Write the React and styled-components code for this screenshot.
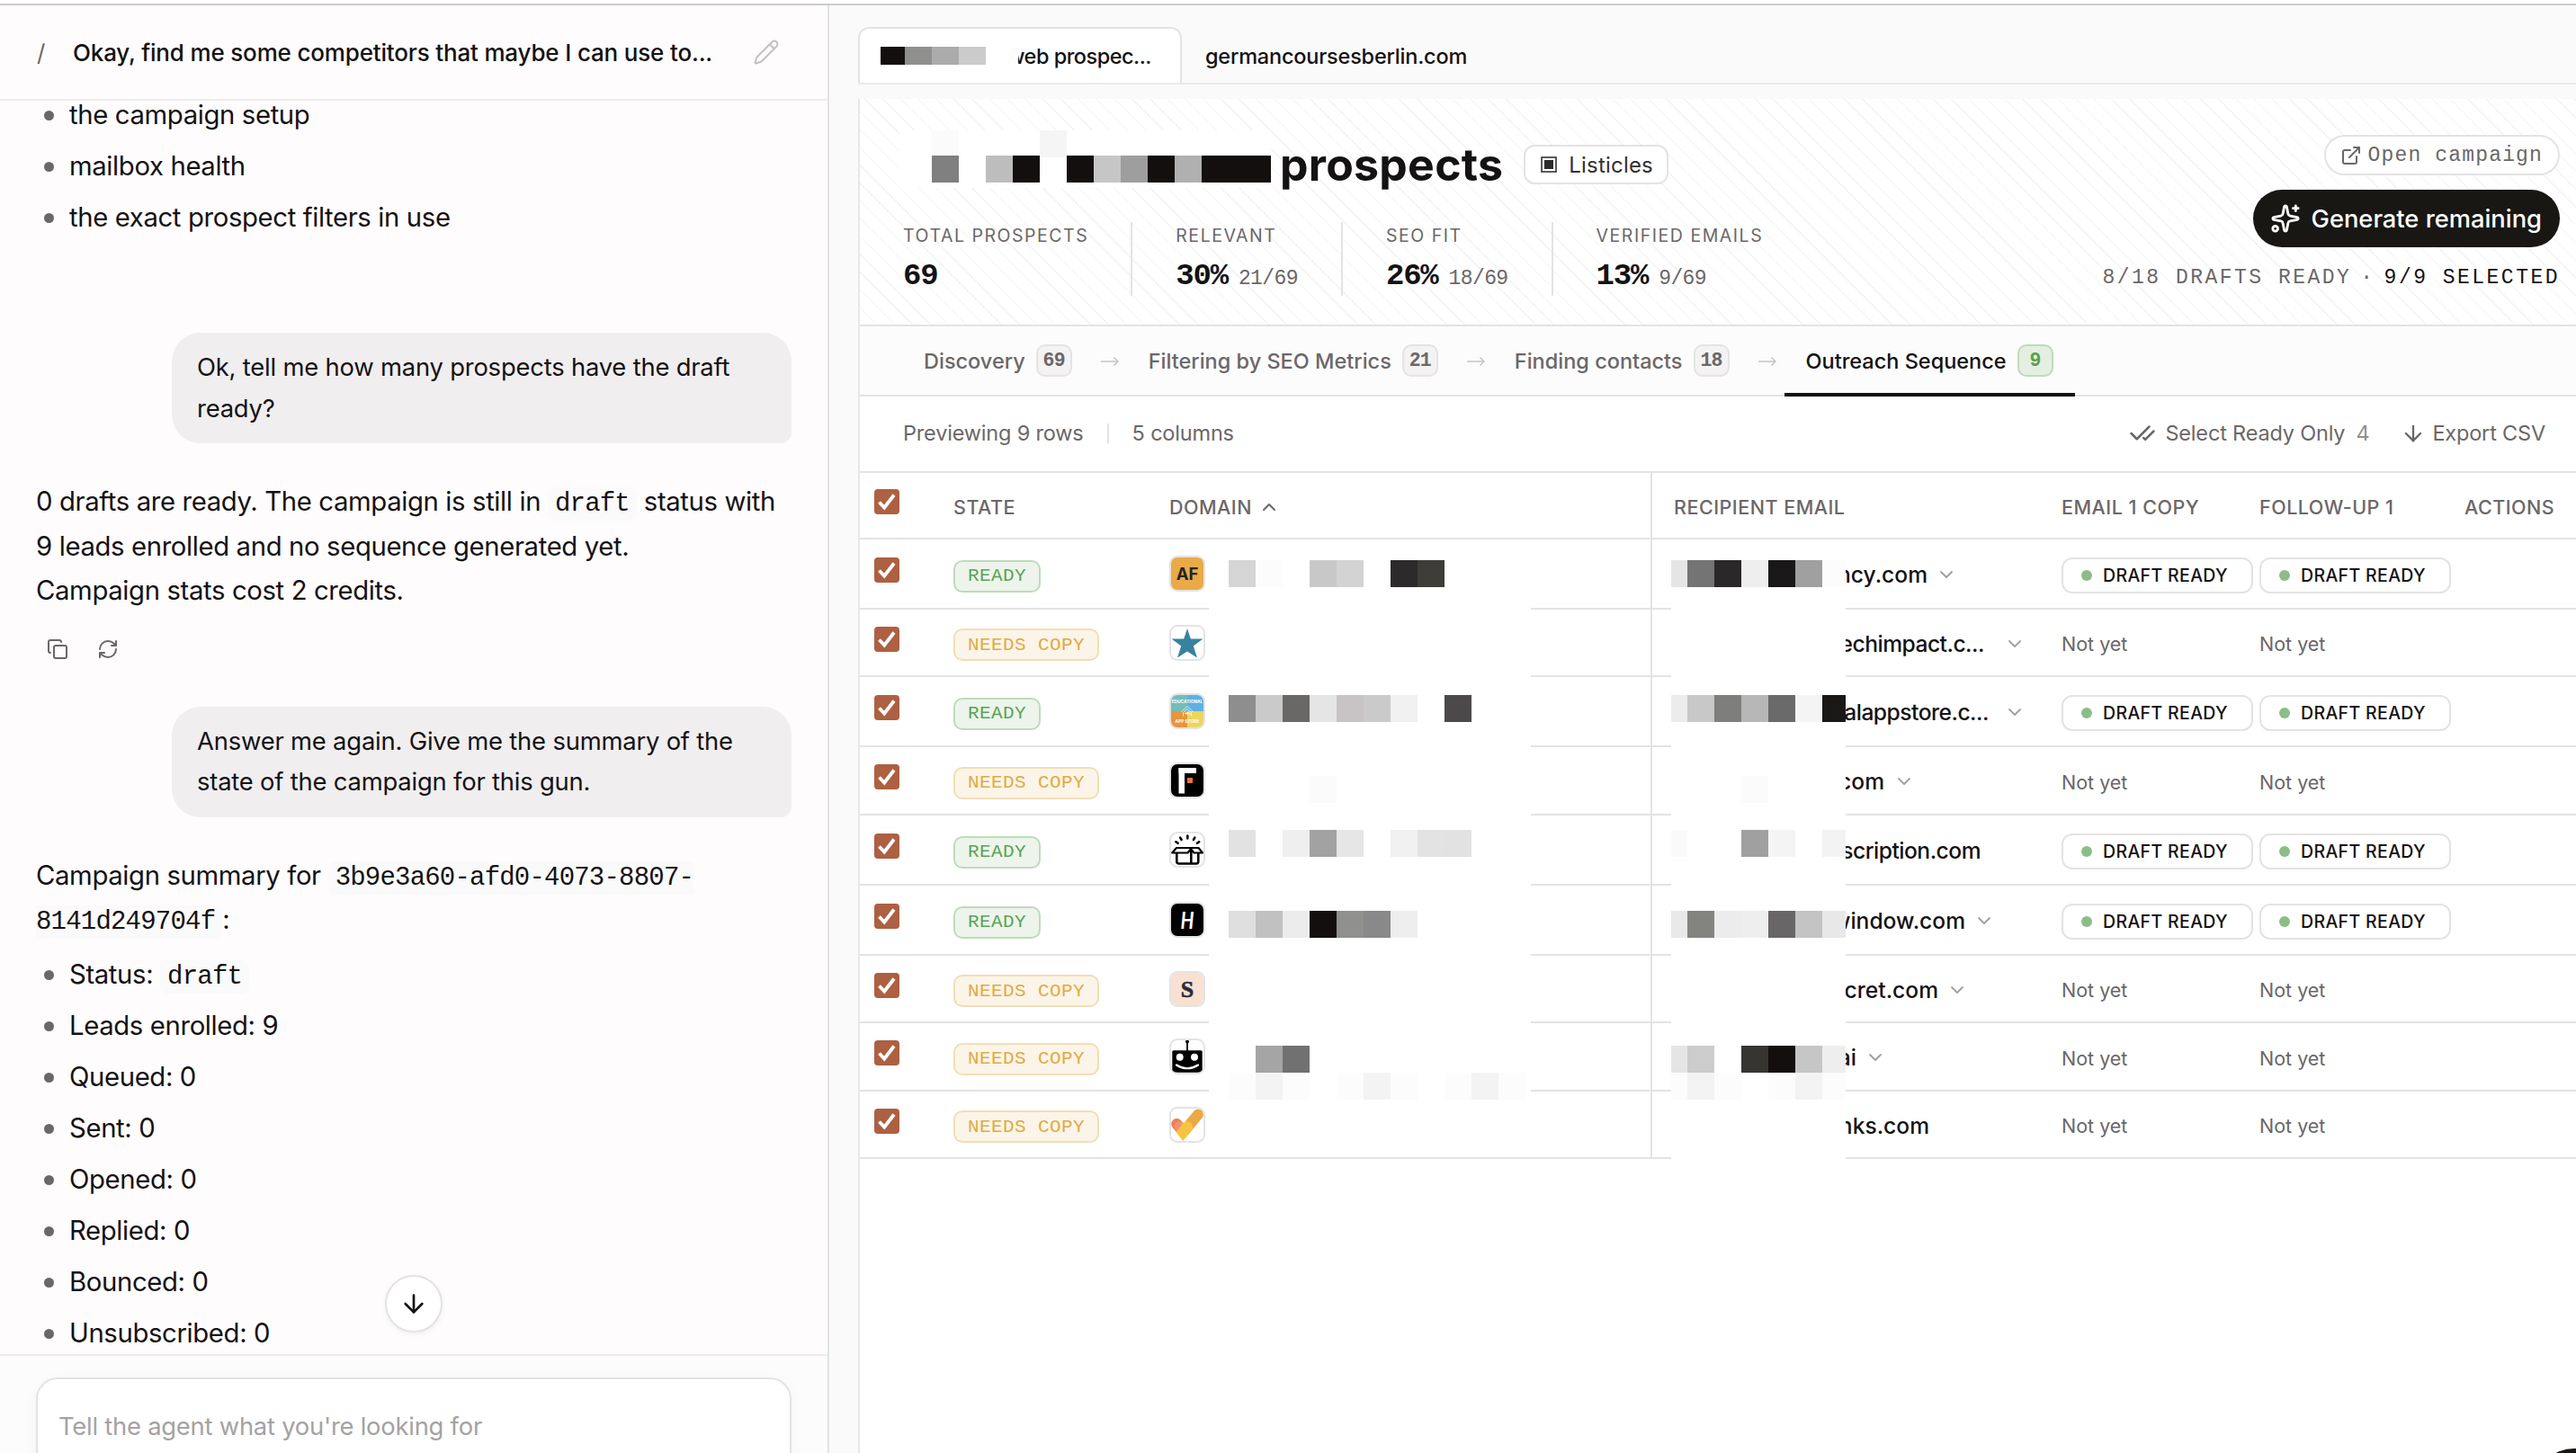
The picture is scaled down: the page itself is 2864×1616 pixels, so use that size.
import React from "react";
import styled, { createGlobalStyle, css } from "styled-components";
import {
  ArrowDown,
  CheckCheck,
  ChevronDown,
  ChevronUp,
  Copy,
  ExternalLink,
  Pencil,
  RefreshCw,
  Sparkles,
} from "lucide-react";

const FONTS = {
  sans: `Inter, "Liberation Sans", sans-serif`,
  mono: `"Liberation Mono", "DejaVu Sans Mono", monospace`,
};

const COLORS = {
  ink: "#141213",
  muted: "#6b6768",
  faint: "#a5a2a3",
  line: "#e4e3e3",
};

const STATS = [
  { label: "Total prospects", value: "69" },
  { label: "Relevant", value: "30%", ratio: "21/69" },
  { label: "SEO fit", value: "26%", ratio: "18/69" },
  { label: "Verified emails", value: "13%", ratio: "9/69" },
];

const STAGES = [
  { name: "Discovery", count: 69 },
  { name: "Filtering by SEO Metrics", count: 21 },
  { name: "Finding contacts", count: 18 },
  { name: "Outreach Sequence", count: 9, active: true },
];

const ROWS = [
  { icon: "af", email: "ncy.com", width: 282, gap: 9, menu: true, ready: true, height: 78 },
  { icon: "star", email: "echimpact.c...", width: 345, gap: 22, tight: true, menu: true, height: 75 },
  { icon: "edu", email: "alappstore.c...", width: 350, gap: 17, tight: true, menu: true, ready: true, height: 78 },
  { icon: "f", email: ".com", width: 234, menu: true, height: 76 },
  { icon: "box", email: "scription.com", width: 341, tight: true, ready: true, height: 78 },
  { icon: "h", email: "window.com", width: 324, gap: 9, menu: true, ready: true, height: 78 },
  { icon: "s", email: "cret.com", width: 294, gap: 9, menu: true, height: 75 },
  { icon: "robot", email: "ai", width: 203, gap: 9, menu: true, height: 76 },
  { icon: "check", email: "nks.com", width: 284, height: 75 },
];

// Each mosaic row is [y, cell colors]; null leaves the cell blank.
const TAB_MOSAIC = [[0, ["#140f0f", "#8f8f8d", "#ababab", "#cbcbcb"]]];

const TITLE_MOSAIC = [
  [0, [null, "#fbfbfb", null, null, null, "#f5f5f5"]],
  [
    28,
    [null, "#808080", null, "#bdbdbd", "#140f0f", null, "#140f0f", "#c6c6c6", "#9e9e9e", "#140f0f", "#b0b0b0", "#140f0f", "#140f0f", "#140f0f"],
  ],
];

const DOMAIN_MOSAIC = [
  [21, ["#d5d5d5", "#fcfcfc", null, "#c8c8c8", "#d3d3d3", null, "#2c2a2b", "#3d3c39"]],
  [171, ["#8e8e8e", "#cacaca", "#696866", "#e5e5e5", "#c8c4c6", "#cacaca", "#f0f0f0", null, "#4b494a"]],
  [261, [null, null, null, "#fbfbfb"]],
  [321, ["#e2e2e2", null, "#efefef", "#a2a2a2", "#e6e6e6", null, "#f0f0f0", "#e3e3e3", "#e2e2e2"]],
  [411, ["#dfdfdf", "#c1c1c1", "#ececec", "#140f0f", "#90908e", "#898989", "#eeeeee"]],
  [561, [null, "#a5a5a5", "#717171"]],
  [591, ["#fcfcfc", "#f3f3f3", "#fcfcfc", null, "#fcfcfc", "#f3f3f3", "#fcfcfc", null, "#fcfcfc", "#f3f3f3", "#fcfcfc"]],
];

const EMAIL_MOSAIC = [
  [21, ["#e5e5e5", "#747474", "#2a2829", "#eeeeee", "#191717", "#a0a0a0", "#fcfcfc"]],
  [171, ["#ececec", "#c8c8c8", "#7e7e7c", "#b7b7b7", "#6a6a6a", "#f4f4f4", "#191816"]],
  [261, [null, null, null, "#fbfbfb"]],
  [321, ["#fafafa", null, null, "#a0a0a0", "#f4f4f4", null, "#f3f3f3"]],
  [411, ["#e9e9e9", "#83847f", "#ececec", "#eeeeee", "#696667", "#c4c4c4", "#e8e8e8"]],
  [561, ["#e5e5e5", "#cccccc", null, "#363532", "#140f0f", "#c6c6c6", "#eeeeee"]],
  [591, ["#fcfcfc", "#f3f3f3", "#fcfcfc", null, "#fcfcfc", "#f3f3f3", "#fcfcfc"]],
];

const Mosaic = ({ cells, width, height, offset = 0, cell = 30 }) => (
  <svg width={width} height={height} shapeRendering="crispEdges" aria-hidden="true">
    {cells.map(([y, colors]) =>
      colors.map((fill, i) =>
        fill ? (
          <rect key={`${y}-${i}`} x={offset + i * 30} y={y} width="30" height={cell} fill={fill} />
        ) : null
      )
    )}
  </svg>
);

const FAVICONS = {
  af: (
    <>
      <rect width="36" height="36" fill="#eaaa47" />
      <text x="18" y="25" textAnchor="middle" fontFamily="Inter, sans-serif" fontWeight="700" fontSize="18.5" fill="#222529">
        AF
      </text>
    </>
  ),
  star: (
    <path
      d="M18 2 L21.8 13.4 L35.5 13.6 L24.8 21.6 L29 34.5 L18 27.4 L7 34.5 L11.2 21.6 L0.5 13.6 L14.2 13.4 Z"
      fill="#37839f"
    />
  ),
  edu: (
    <>
      <rect width="18" height="18" fill="#74bdb9" />
      <rect x="18" width="18" height="18" fill="#5fb1e2" />
      <rect y="18" width="18" height="18" fill="#e7963a" />
      <rect x="18" y="18" width="18" height="18" fill="#ebd660" />
      <path d="M11.5 18.5 L18 12.5 L24.5 18.5 M13.5 23.5 V19.5 L18 15.5 L22.5 19.5 V23.5" fill="none" stroke="#fff" strokeOpacity="0.7" />
      <path d="M14.5 21 Q18 17.5 22 21.5 Z" fill="#fff" />
      <text x="18" y="9" textAnchor="middle" fontFamily="Inter, sans-serif" fontWeight="700" fontSize="4.8" fill="#fff">
        EDUCATIONAL
      </text>
      <text x="18" y="30.5" textAnchor="middle" fontFamily="Inter, sans-serif" fontWeight="700" fontSize="4.8" fill="#fff">
        APP STORE
      </text>
    </>
  ),
  f: (
    <>
      <rect width="36" height="36" fill="#000" />
      <rect x="8.5" y="4" width="6.5" height="28.5" fill="#fff" />
      <rect x="8.5" y="4" width="19.5" height="6" fill="#fff" />
      <rect x="18" y="15" width="6" height="6" fill="#e8703a" />
    </>
  ),
  box: (
    <g fill="none" stroke="#000" strokeWidth="2.6" strokeLinecap="round" strokeLinejoin="round">
      <path d="M18.3 2.5 V5.5 M10.2 4.6 L11.6 7 M26.3 4.6 L25 7 M5.4 9.3 L7.6 10.8 M31.2 9.3 L29 10.8" />
      <path d="M6 16 H30.5 L35 21.5 H25.5 L22 17.2 L18.5 21.5 H1.2 Z" strokeWidth="2.2" />
      <path d="M6.3 22.5 V31 Q6.3 33.5 8.8 33.5 H28 Q30.3 33.5 30.3 31 V22.5 M22.3 20 V33" />
    </g>
  ),
  h: (
    <>
      <rect width="36" height="36" fill="#000" />
      <text x="18" y="27.5" textAnchor="middle" fontFamily="Lato, sans-serif" fontStyle="italic" fontWeight="700" fontSize="27" fill="#fff" textLength="15" lengthAdjust="spacingAndGlyphs">
        H
      </text>
    </>
  ),
  s: (
    <>
      <rect width="36" height="36" rx="5" fill="#f9e1d1" />
      <text x="18" y="26.5" textAnchor="middle" fontFamily="'Liberation Serif', serif" fontWeight="700" fontSize="26" fill="#2b2c3c" stroke="#2b2c3c" strokeWidth="0.6">
        S
      </text>
    </>
  ),
  robot: (
    <>
      <circle cx="18" cy="1.6" r="2" />
      <path d="M18 1 V12" stroke="#000" strokeWidth="1.8" />
      <rect x="1.3" y="11.3" width="33.4" height="24.4" rx="1.5" />
      <circle cx="9.7" cy="18.7" r="4" fill="#fff" />
      <circle cx="26" cy="18.7" r="4" fill="#fff" />
      <path d="M6 27.5 Q18 35 30 27.5" fill="none" stroke="#fff" strokeWidth="2.2" strokeLinecap="round" />
    </>
  ),
  check: (
    <>
      <path d="M6.2 17 L13 25" stroke="#ee7d57" strokeWidth="12" strokeLinecap="round" />
      <path d="M30 6.5 L15.5 24" stroke="#eaa944" strokeWidth="12" strokeLinecap="round" />
      <circle cx="9.5" cy="19.5" r="5.6" fill="#f1926a" />
      <path d="M13.3 36 L5.4 26 L13.2 16.3 Q18.5 12.5 22.2 16 Q25.8 20.5 22.4 25 Z" fill="#f6c442" />
    </>
  ),
};

const Checkbox = () => (
  <CheckboxBox role="checkbox" aria-checked="true">
    <svg width="28" height="28" viewBox="0 0 28 28" fill="none" stroke="#fff" strokeWidth="3.8">
      <path d="M5.5 14.5 L11.2 20.5 L22 6.5" />
    </svg>
  </CheckboxBox>
);

const CopyState = ({ ready }) =>
  ready ? (
    <DraftButton>
      <Dot />
      Draft ready
    </DraftButton>
  ) : (
    <NotYet>Not yet</NotYet>
  );

const ProspectRow = ({ icon, email, width, gap, tight, menu, ready, height }) => (
  <Row $height={height}>
    <Cell $nudge={-8}>
      <Checkbox />
    </Cell>
    <Cell $nudge={5}>
      <Badge $ready={ready}>{ready ? "Ready" : "Needs copy"}</Badge>
    </Cell>
    <DomainCell>
      <Favicon>
        <svg width="36" height="36" viewBox="0 0 36 36">
          {FAVICONS[icon]}
        </svg>
      </Favicon>
    </DomainCell>
    <EmailCell $nudge={2}>
      <EmailText $width={width} $tight={tight}>
        {email}
      </EmailText>
      {menu && (
        <EmailMenu $gap={gap}>
          <ChevronDown size={24} strokeWidth={1.8} />
        </EmailMenu>
      )}
    </EmailCell>
    <Cell $nudge={3}>
      <CopyState ready={ready} />
    </Cell>
    <Cell $nudge={3}>
      <CopyState ready={ready} />
    </Cell>
    <Cell />
  </Row>
);

const ChatPanel = () => (
  <Chat>
    <ChatHeader>
      <Slash>/</Slash>
      <ChatTitle>Okay, find me some competitors that maybe I can use to...</ChatTitle>
      <Pencil size={30} strokeWidth={1.6} />
    </ChatHeader>
    <Messages>
      <BulletList $first>
        <li>the campaign setup</li>
        <li>mailbox health</li>
        <li>the exact prospect filters in use</li>
      </BulletList>
      <Bubble $top={104}>
        Ok, tell me how many prospects have the draft
        <br />
        ready?
      </Bubble>
      <Paragraph>
        0 drafts are ready. The campaign is still in <Code>draft</Code> status with
        <br />
        9 leads enrolled and no sequence generated yet.
        <br />
        Campaign stats cost 2 credits.
      </Paragraph>
      <MessageActions>
        <Copy size={24} strokeWidth={2} />
        <RefreshCw size={24} strokeWidth={2} />
      </MessageActions>
      <Bubble $top={52}>
        Answer me again. Give me the summary of the
        <br />
        state of the campaign for this gun.
      </Bubble>
      <Paragraph>
        Campaign summary for{" "}
        <Code>
          3b9e3a60-afd0-4073-8807-
          <br />
          8141d249704f
        </Code>
        :
      </Paragraph>
      <BulletList>
        <li>
          Status: <Code>draft</Code>
        </li>
        <li>Leads enrolled: 9</li>
        <li>Queued: 0</li>
        <li>Sent: 0</li>
        <li>Opened: 0</li>
        <li>Replied: 0</li>
        <li>Bounced: 0</li>
        <li>Unsubscribed: 0</li>
      </BulletList>
      <ScrollButton aria-label="Scroll to bottom">
        <ArrowDown size={32} strokeWidth={2} />
      </ScrollButton>
    </Messages>
    <Composer>
      <ComposerBox>Tell the agent what you're looking for</ComposerBox>
    </Composer>
  </Chat>
);

const CampaignHeader = () => (
  <Hero>
    <div>
      <TitleRow>
        <TitleMask>
          <Mosaic cells={TITLE_MOSAIC} width={413} height={64} offset={6} />
        </TitleMask>
        <Title>prospects</Title>
        <KindPill>
          <svg width="18" height="18" viewBox="0 0 18 18">
            <rect x="1" y="1" width="16" height="16" fill="none" stroke="#333" strokeWidth="1.6" />
            <rect x="4" y="4" width="10" height="10" fill="#2b2b2b" />
          </svg>
          Listicles
        </KindPill>
      </TitleRow>
      <Stats>
        {STATS.map(({ label, value, ratio }) => (
          <Stat key={label}>
            <StatLabel>{label}</StatLabel>
            <StatValue>
              {value}
              {ratio && <Ratio>{ratio}</Ratio>}
            </StatValue>
          </Stat>
        ))}
      </Stats>
    </div>
    <HeroActions>
      <OpenButton>
        <ExternalLink size={24} strokeWidth={2} />
        Open campaign
      </OpenButton>
      <GenerateButton>
        <Sparkles size={34} strokeWidth={2} />
        Generate remaining
      </GenerateButton>
      <DraftSummary>
        <span>8/18 drafts ready</span>
        <span>·</span>
        <strong>9/9 selected</strong>
      </DraftSummary>
    </HeroActions>
  </Hero>
);

const App = () => (
  <>
    <GlobalStyle />
    <Page>
      <Workspace>
        <ChatPanel />
        <Main>
          <FileTabs>
            <FileTab $active>
              <TabMask>
                <Mosaic cells={TAB_MOSAIC} width={153} height={20} offset={-3} cell={20} />
              </TabMask>
              <MaskedLabel>web prospec...</MaskedLabel>
            </FileTab>
            <FileTab>germancoursesberlin.com</FileTab>
          </FileTabs>
          <Panel>
            <CampaignHeader />
            <Stages>
              {STAGES.map(({ name, count, active }, i) => (
                <React.Fragment key={name}>
                  {i > 0 && (
                    <StageArrow>
                      <svg width="20" height="12" viewBox="0 0 20 12" fill="none" stroke="#c6c4c5" strokeWidth="1.5">
                        <path d="M0 6 H19 M14.5 1.5 L19 6 L14.5 10.5" />
                      </svg>
                    </StageArrow>
                  )}
                  <Stage $active={active}>
                    {name}
                    <Count $active={active}>{count}</Count>
                  </Stage>
                </React.Fragment>
              ))}
            </Stages>
            <Toolbar>
              <span>Previewing 9 rows</span>
              <Divider />
              <span>5 columns</span>
              <ToolbarButton $push $gap={10}>
                <CheckCheck size={30} strokeWidth={2} />
                Select Ready Only <small>4</small>
              </ToolbarButton>
              <ToolbarButton $gap={7}>
                <ArrowDown size={28} strokeWidth={2} />
                Export CSV
              </ToolbarButton>
            </Toolbar>
            <Table>
              <HeadRow>
                <Cell $nudge={-9}>
                  <Checkbox />
                </Cell>
                <Cell>State</Cell>
                <DomainCell $nudge={3}>
                  Domain
                  <ChevronUp size={24} strokeWidth={2} />
                </DomainCell>
                <EmailCell>Recipient email</EmailCell>
                <Cell>Email 1 copy</Cell>
                <Cell>Follow-up 1</Cell>
                <Cell>Actions</Cell>
              </HeadRow>
              {ROWS.map((row) => (
                <ProspectRow key={row.icon} {...row} />
              ))}
              <DomainMask>
                <Mosaic cells={DOMAIN_MOSAIC} width={358} height={678} offset={22} />
              </DomainMask>
              <EmailMask>
                <Mosaic cells={EMAIL_MOSAIC} width={194} height={708} offset={-12} />
              </EmailMask>
            </Table>
          </Panel>
        </Main>
      </Workspace>
      <HelpBubble />
    </Page>
  </>
);

const GlobalStyle = createGlobalStyle`
  *,
  *::before,
  *::after {
    box-sizing: border-box;
  }

  body {
    margin: 0;
    background: #fff;
    color: ${COLORS.ink};
    font-family: ${FONTS.sans};
  }

  button {
    font: inherit;
    color: inherit;
    margin: 0;
  }

  svg {
    display: block;
    flex-shrink: 0;
  }
`;

const Page = styled.div`
  position: relative;
  width: 2864px;
  height: 1616px;
  padding-top: 4px;
  overflow: hidden;
`;

const Workspace = styled.div`
  display: flex;
  height: 1612px;
  border-top: 2px solid #cccbcc;
`;

/* Chat */

const Chat = styled.aside`
  display: flex;
  flex-direction: column;
  width: 922px;
  flex-shrink: 0;
  background: #fefcfd;
  border-right: 2px solid ${COLORS.line};
`;

const ChatHeader = styled.header`
  display: flex;
  align-items: center;
  height: 106px;
  flex-shrink: 0;
  padding: 0 53px 0 41px;
  border-bottom: 2px solid #edebec;

  svg {
    margin-left: auto;
    color: #c3c0c1;
  }
`;

const Slash = styled.span`
  width: 40px;
  font-size: 26px;
  color: ${COLORS.muted};
`;

const ChatTitle = styled.h1`
  margin: 0;
  font-size: 26px;
  font-weight: 500;
  letter-spacing: -0.17px;
  white-space: nowrap;
`;

const Messages = styled.div`
  position: relative;
  flex: 1;
  min-height: 0;
  padding: 0 40px;
`;

const proseText = css`
  font-size: 29.3px;
  line-height: 49.5px;
  letter-spacing: -0.37px;
`;

const BulletList = styled.ul`
  ${proseText}
  display: flex;
  flex-direction: column;
  gap: 7.5px;
  margin: ${({ $first }) => ($first ? "0" : "11px")} 0 0;
  padding: 0;
  list-style: none;

  li {
    padding-left: 9px;
    white-space: pre;
  }

  li::before {
    content: "";
    display: inline-block;
    width: 11px;
    height: 11px;
    margin-right: 17px;
    border-radius: 50%;
    background: ${COLORS.muted};
    vertical-align: 4px;
  }

  ${({ $first }) =>
    $first &&
    css`
      li:first-child {
        line-height: 31px;
        margin-bottom: 9px;
      }
    `}
`;

const Bubble = styled.div`
  width: 689px;
  margin: ${({ $top }) => $top}px 0 0 auto;
  padding: 16px 28px;
  border-radius: 32px 32px 12px 32px;
  background: #f0eeef;
  font-size: 27.4px;
  line-height: 45.5px;
  letter-spacing: -0.2px;
  white-space: nowrap;
`;

const Paragraph = styled.p`
  ${proseText}
  margin: 40px 0 0;
  white-space: nowrap;
`;

const Code = styled.code`
  padding: 2px 8px;
  border-radius: 8px;
  background: #fafafa;
  font-family: ${FONTS.mono};
  font-size: 29px;
  line-height: 32px;
  letter-spacing: -0.8px;
`;

const MessageActions = styled.div`
  display: flex;
  gap: 32px;
  margin-top: 28px;
  padding-left: 12px;
  color: ${COLORS.muted};
`;

const ScrollButton = styled.button`
  position: absolute;
  left: 428px;
  bottom: 24px;
  display: grid;
  place-items: center;
  width: 64px;
  height: 64px;
  padding: 0;
  border: 2px solid ${COLORS.line};
  border-radius: 50%;
  background: #fff;
  box-shadow: 0 2px 6px rgba(0, 0, 0, 0.06);
`;

const Composer = styled.footer`
  height: 110px;
  flex-shrink: 0;
  padding: 24px 40px 0;
  border-top: 2px solid #edebec;
  background: #fdfcfc;
  overflow: hidden;
`;

const ComposerBox = styled.div`
  height: 180px;
  padding: 30px 23px;
  border: 2px solid ${COLORS.line};
  border-radius: 24px;
  background: #fff;
  box-shadow: 0 4px 16px rgba(0, 0, 0, 0.04);
  color: ${COLORS.faint};
  font-size: 27.4px;
  line-height: 44px;
  letter-spacing: -0.24px;
`;

/* Main area */

const Main = styled.main`
  display: flex;
  flex-direction: column;
  flex: 1;
  min-width: 0;
  padding-left: 32px;
  background: #fafafa;
`;

const FileTabs = styled.nav`
  display: flex;
  align-items: flex-end;
  height: 88px;
  flex-shrink: 0;
  border-bottom: 2px solid #ebeaea;
`;

const FileTab = styled.div`
  display: flex;
  align-items: center;
  height: 62px;
  padding: 0 24px;
  border: 2px solid transparent;
  border-bottom: none;
  border-radius: 12px 12px 0 0;
  font-size: 23.5px;
  font-weight: 500;
  letter-spacing: -0.2px;
  white-space: nowrap;

  ${({ $active }) =>
    $active &&
    css`
      width: 360px;
      background: #fff;
      border-color: ${COLORS.line};
    `}
`;

const TabMask = styled.span`
  position: relative;
  z-index: 1;
  margin-left: -1px;
  padding: 6px 0;
  background: #fff;
`;

const MaskedLabel = styled.span`
  margin-left: -12px;
  letter-spacing: -0.5px;
`;

const Panel = styled.section`
  flex: 1;
  margin-top: 16px;
  border-left: 2px solid #e9e8e8;
  background: #fff;
`;

const Hero = styled.header`
  display: flex;
  justify-content: space-between;
  height: 253px;
  padding: 35px 18px 0 48px;
  border-bottom: 2px solid ${COLORS.line};
  background: repeating-linear-gradient(
    45deg,
    transparent 0 13px,
    #f3f3f3 13px 14px
  );
`;

const TitleRow = styled.div`
  display: flex;
  align-items: flex-end;
  height: 64px;
`;

const TitleMask = styled.span`
  margin-left: -4px;
  background: #fff;
`;

const Title = styled.h2`
  margin: 0 0 -4px 10px;
  font-size: 50px;
  line-height: 60px;
  font-weight: 700;
  letter-spacing: 0.25px;
`;

const KindPill = styled.span`
  display: flex;
  align-items: center;
  gap: 13px;
  height: 44px;
  margin: 0 0 4px 23px;
  padding: 0 15px 0 17px;
  border: 2px solid ${COLORS.line};
  border-radius: 12px;
  background: #fff;
  color: #333132;
  font-size: 24px;
  letter-spacing: 0.2px;
`;

const Stats = styled.div`
  display: flex;
  margin-top: 38px;
`;

const Stat = styled.div`
  height: 82px;
  padding: 2px 48px 0;

  &:first-child {
    padding: 2px 47px 0 0;
  }

  & + & {
    border-left: 2px solid ${COLORS.line};
  }
`;

const StatLabel = styled.div`
  color: ${COLORS.muted};
  font-size: 19.5px;
  line-height: 26px;
  letter-spacing: 1.54px;
  text-transform: uppercase;
`;

const StatValue = styled.div`
  font-family: ${FONTS.mono};
  font-size: 34px;
  font-weight: 700;
  line-height: 36px;
  letter-spacing: -1.2px;
  margin-top: 14px;
`;

const Ratio = styled.span`
  margin-left: 12px;
  color: ${COLORS.muted};
  font-size: 23px;
  font-weight: 400;
  letter-spacing: -0.6px;
`;

const HeroActions = styled.div`
  display: flex;
  flex-direction: column;
  align-items: flex-end;
  padding-top: 5px;
`;

const OpenButton = styled.button`
  display: flex;
  align-items: center;
  gap: 7px;
  height: 45px;
  padding: 0 17px 0 16px;
  border: 2px solid ${COLORS.line};
  border-radius: 23px;
  background: #fff;
  color: ${COLORS.muted};
  font-family: ${FONTS.mono};
  font-size: 23px;
  letter-spacing: 1.15px;
`;

const GenerateButton = styled.button`
  display: flex;
  align-items: center;
  gap: 12px;
  height: 64px;
  margin-top: 16px;
  padding: 0 20px 0 19px;
  border: none;
  border-radius: 32px;
  background: #191714;
  color: #fff;
  font-size: 27.3px;
  font-weight: 500;
`;

const DraftSummary = styled.div`
  display: flex;
  gap: 10px;
  margin-top: 18px;
  color: ${COLORS.muted};
  font-family: ${FONTS.mono};
  font-size: 23px;
  line-height: 32px;
  letter-spacing: 2.48px;
  text-transform: uppercase;

  strong {
    color: ${COLORS.ink};
    font-weight: 400;
  }
`;

const Stages = styled.nav`
  display: flex;
  height: 78px;
  padding-left: 47px;
  border-bottom: 2px solid ${COLORS.line};
  background: #fcfcfc;
`;

const Stage = styled.div`
  display: flex;
  align-items: center;
  gap: 12px;
  height: 78px;
  padding: 0 24px 2px;
  color: ${({ $active }) => ($active ? COLORS.ink : COLORS.muted)};
  font-size: 23.5px;
  font-weight: 500;
  white-space: nowrap;
  box-shadow: ${({ $active }) => ($active ? `inset 0 -4px ${COLORS.ink}` : "none")};
`;

const Count = styled.span`
  display: grid;
  place-items: center;
  min-width: 40px;
  height: 36px;
  border: 2px solid ${({ $active }) => ($active ? "#bddcb9" : "#e5e3e4")};
  border-radius: 10px;
  background: ${({ $active }) => ($active ? "#e4efe2" : "#f4f2f3")};
  color: ${({ $active }) => ($active ? "#58a351" : COLORS.muted)};
  font-family: ${FONTS.mono};
  font-size: 21.5px;
  font-weight: 700;
  letter-spacing: -0.8px;
`;

const StageArrow = styled.span`
  display: grid;
  place-items: center;
  width: 37px;
  padding-top: 1px;
`;

const Toolbar = styled.div`
  display: flex;
  align-items: center;
  height: 85px;
  padding: 0 34px 2px 48px;
  border-bottom: 2px solid ${COLORS.line};
  color: ${COLORS.muted};
  font-size: 23.5px;
  letter-spacing: -0.18px;
  white-space: nowrap;
`;

const Divider = styled.span`
  width: 2px;
  height: 22px;
  margin: 0 26px;
  background: ${COLORS.line};
`;

const ToolbarButton = styled.div`
  display: flex;
  align-items: center;
  gap: ${({ $gap }) => $gap}px;
  margin-left: ${({ $push }) => ($push ? "auto" : "35px")};

  small {
    margin-left: 2px;
    color: #918e8f;
    font-size: inherit;
  }
`;

/* Prospects table */

const Table = styled.div`
  position: relative;
`;

const Row = styled.div`
  display: grid;
  grid-template-columns: 104px 240px 537px 455px 220px 228px 124px;
  height: ${({ $height }) => $height}px;
  border-bottom: 2px solid ${COLORS.line};
`;

const HeadRow = styled(Row)`
  height: 74px;
  color: ${COLORS.muted};
  font-size: 21.5px;
  font-weight: 500;
  letter-spacing: 0.5px;
  text-transform: uppercase;
  white-space: nowrap;
`;

const Cell = styled.div`
  display: flex;
  align-items: center;
  min-width: 0;
  padding-top: ${({ $nudge = 3 }) => Math.max($nudge, 0)}px;
  padding-bottom: ${({ $nudge = 3 }) => Math.max(-$nudge, 0)}px;

  &:first-child {
    padding-left: 16px;
  }
`;

const DomainCell = styled(Cell).attrs(({ $nudge = 0 }) => ({ $nudge }))`
  gap: 7px;
  border-right: 2px solid ${COLORS.line};
`;

const EmailCell = styled(Cell)`
  padding-left: 24px;
`;

const CheckboxBox = styled.span`
  width: 28px;
  height: 28px;
  border-radius: 4px;
  background: #ad6042;
`;

const Badge = styled.span`
  display: flex;
  align-items: center;
  height: 36px;
  padding: 0 14px;
  border: 2px solid ${({ $ready }) => ($ready ? "#bddcb9" : "#f3deb3")};
  border-radius: 10px;
  background: ${({ $ready }) => ($ready ? "#edf4ec" : "#fbf4e8")};
  color: ${({ $ready }) => ($ready ? "#5aa454" : "#dfab42")};
  font-family: ${FONTS.mono};
  font-size: 21px;
  letter-spacing: 0.4px;
  text-transform: uppercase;
  white-space: pre;
`;

const Favicon = styled.span`
  width: 40px;
  height: 40px;
  border: 2px solid ${COLORS.line};
  border-radius: 9px;
  background: #fff;
  overflow: hidden;
`;

const EmailText = styled.span`
  width: ${({ $width }) => $width}px;
  font-size: 24.6px;
  font-weight: 500;
  letter-spacing: ${({ $tight }) => ($tight ? "-0.5px" : "0")};
  text-align: right;
  white-space: nowrap;
`;

const EmailMenu = styled.span`
  margin-left: ${({ $gap = 10 }) => $gap}px;
  color: #a19e9f;
`;

const DraftButton = styled.button`
  display: flex;
  align-items: center;
  gap: 12px;
  width: 213px;
  height: 40px;
  padding: 0 0 0 20px;
  border: 2px solid ${COLORS.line};
  border-radius: 12px;
  background: #fff;
  font-size: 19.5px;
  font-weight: 500;
  letter-spacing: 0.35px;
  text-transform: uppercase;
`;

const Dot = styled.span`
  width: 12px;
  height: 12px;
  border-radius: 50%;
  background: #8cbd88;
`;

const NotYet = styled.span`
  color: ${COLORS.muted};
  font-size: 21.5px;
`;

const Mask = styled.div`
  position: absolute;
  top: 76px;
  background: #fff;
`;

const DomainMask = styled(Mask)`
  left: 388px;
`;

const EmailMask = styled(Mask)`
  left: 902px;
`;

const HelpBubble = styled.div`
  position: absolute;
  right: -42px;
  bottom: -83px;
  width: 88px;
  height: 88px;
  border-radius: 50%;
  background: #191714;
`;

export default App;
